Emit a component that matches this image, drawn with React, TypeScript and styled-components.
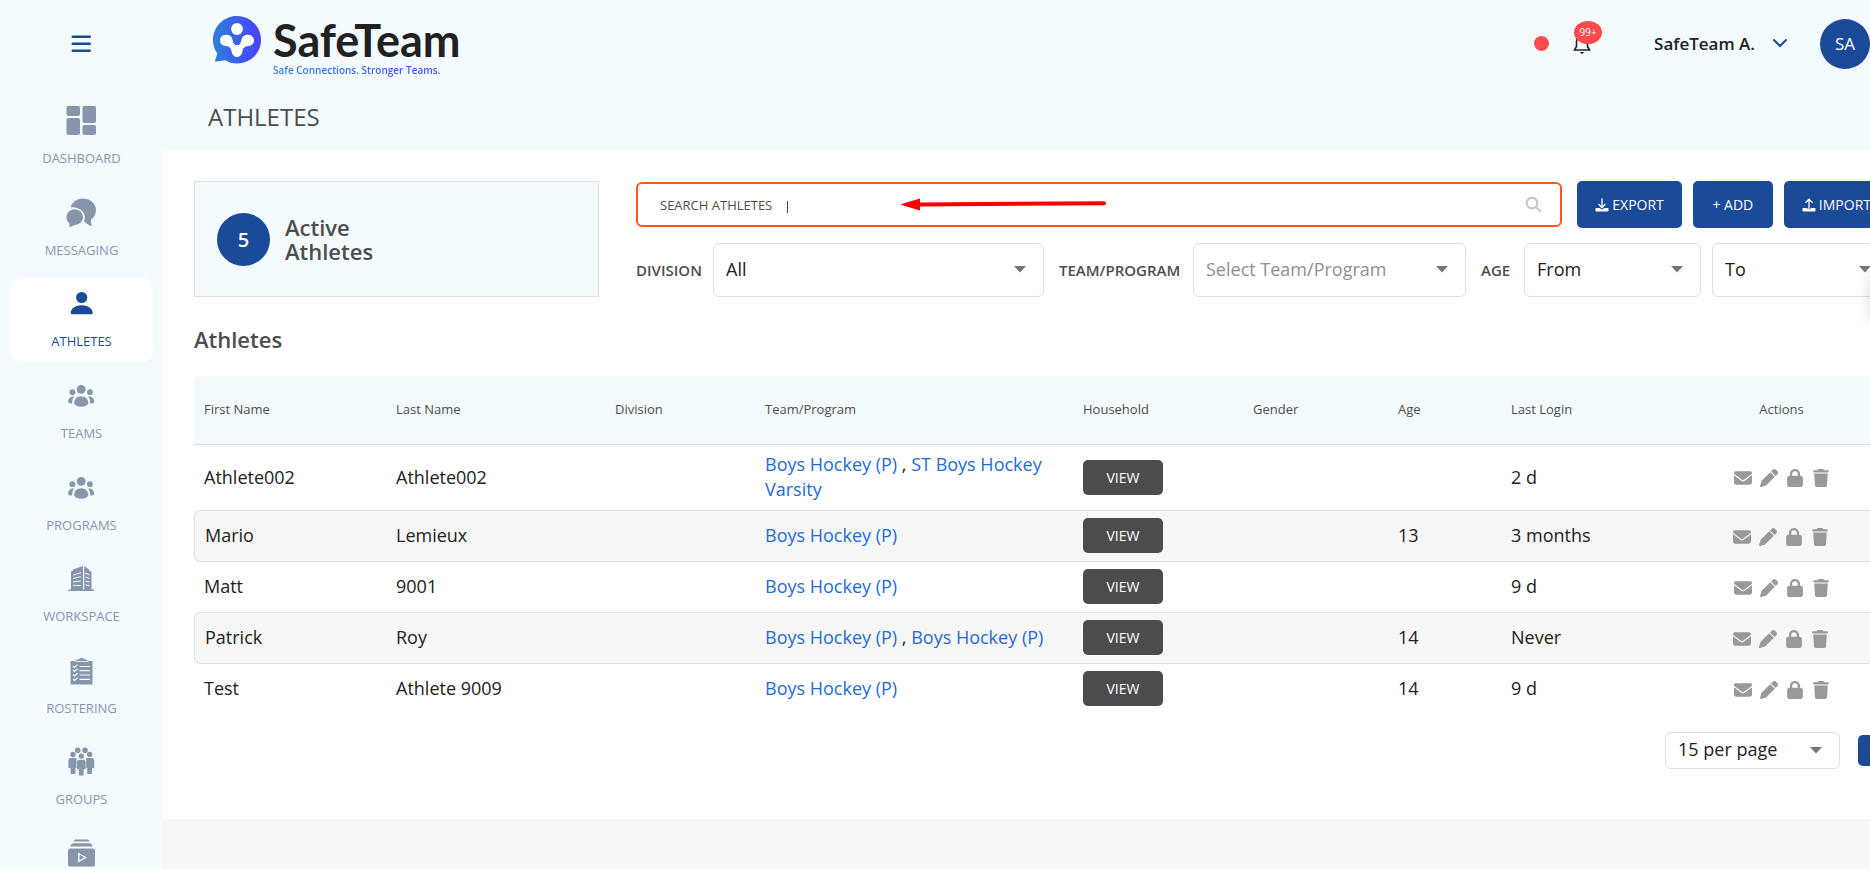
import React from "react";
import styled, { createGlobalStyle } from "styled-components";
import { FaEnvelope, FaLock, FaPen, FaTrash } from "react-icons/fa6";

const color = {
  brand: "#1b4a99",
  tint: "#f3fbff",
  muted: "#8896ab",
  heading: "#4d4d4d",
  text: "#212121",
  line: "#dddfe1",
  stripe: "#f7f7f7",
  alert: "#ff4b4b",
  accent: "#ff5722",
  link: "#1f6bd8",
};

const GlobalStyle = createGlobalStyle`
  *, *::before, *::after { box-sizing: border-box; }
  body {
    margin: 0;
    overflow: hidden;
    background: ${color.stripe};
    color: ${color.text};
    font-family: "Open Sans", sans-serif;
    font-size: 18px;
  }
  button, input, select { font-family: inherit; }
  h1, h2, p { margin: 0; }
`;

const Viewport = styled.div`
  height: 100vh;
  overflow: hidden;
`;

const Shell = styled.div`
  display: flex;
  width: calc(100% + 50px);
  height: 100%;
`;

const Sidebar = styled.nav`
  flex: 0 0 163px;
  overflow: hidden;
  padding: 0 10px;
  background: ${color.tint};
`;

const MenuButton = styled.button`
  display: flex;
  align-items: center;
  justify-content: center;
  width: 100%;
  height: 87px;
  padding: 0;
  border: 0;
  background: none;
  color: ${color.brand};
`;

const NavList = styled.ul`
  display: flex;
  flex-direction: column;
  justify-content: space-between;
  min-height: 818px;
  margin: 7px 0 0;
  padding: 0;
  list-style: none;
`;

const NavLink = styled.a<{ $active?: boolean }>`
  display: flex;
  flex-direction: column;
  align-items: center;
  gap: 13px;
  height: 85px;
  padding-top: 11px;
  border-radius: 12px;
  background: ${(p) => (p.$active ? "#fff" : "transparent")};
  color: ${(p) => (p.$active ? color.brand : color.muted)};
  font-size: 13px;
  line-height: 16px;
  text-decoration: none;
`;

const Column = styled.div`
  display: flex;
  flex: 1;
  flex-direction: column;
  min-width: 0;
`;

const Header = styled.header`
  display: flex;
  align-items: center;
  height: 87px;
  padding: 0 50px;
  background: ${color.tint};
`;

const Brand = styled.a`
  display: flex;
  align-items: flex-start;
  gap: 12px;
  padding-top: 5px;
  text-decoration: none;
`;

const BrandText = styled.span`
  display: flex;
  flex-direction: column;
`;

const BrandName = styled.span`
  color: #212121;
  font-family: Lato, sans-serif;
  font-size: 45px;
  font-weight: 700;
  line-height: 48px;
`;

const Tagline = styled.span`
  align-self: flex-start;
  background: linear-gradient(90deg, #2f80d8, #4a48ff);
  background-clip: text;
  -webkit-background-clip: text;
  color: transparent;
  font-size: 10px;
  font-weight: 600;
  line-height: 13px;
`;

const Account = styled.div`
  display: flex;
  align-items: center;
  margin-left: auto;
`;

const StatusDot = styled.span`
  width: 15px;
  height: 15px;
  border-radius: 50%;
  background: ${color.alert};
`;

const BellButton = styled.button`
  position: relative;
  display: flex;
  margin-left: 23px;
  padding: 0;
  border: 0;
  background: none;
  color: ${color.text};
`;

const Badge = styled.span`
  position: absolute;
  top: -13px;
  left: 2px;
  width: 28px;
  height: 23px;
  border-radius: 50%;
  background: ${color.alert};
  color: #fff;
  font-size: 10px;
  line-height: 23px;
  text-align: center;
`;

const AccountButton = styled.button`
  display: flex;
  align-items: center;
  gap: 18px;
  margin-left: 62px;
  padding: 0;
  border: 0;
  background: none;
  color: ${color.text};
  font-size: 17px;
  font-weight: 600;
  line-height: 24px;
  svg { color: ${color.brand}; }
`;

const Avatar = styled.span`
  display: grid;
  place-items: center;
  width: 50px;
  height: 50px;
  margin-left: 33px;
  border-radius: 50%;
  background: ${color.brand};
  color: #fff;
  font-size: 17px;
  font-weight: 500;
`;

const TitleBar = styled.div`
  height: 63px;
  padding: 16px 45px 0;
  background: ${color.tint};
`;

const PageTitle = styled.h1`
  color: ${color.heading};
  font-size: 24px;
  font-weight: 400;
  line-height: 28px;
`;

const Main = styled.main`
  padding: 31px 31px 50px;
  background: #fff;
`;

const Toolbar = styled.section`
  display: grid;
  grid-template-columns: 405fr 1253fr;
  gap: 37px;
`;

const CountCard = styled.div`
  display: flex;
  align-items: center;
  gap: 15px;
  padding: 0 22px;
  border: 1px solid ${color.line};
  background: ${color.tint};
`;

const Count = styled.span`
  display: grid;
  place-items: center;
  width: 53px;
  height: 53px;
  border-radius: 50%;
  background: ${color.brand};
  color: #fff;
  font-size: 20px;
  font-weight: 600;
`;

const CountLabel = styled.span`
  width: 100px;
  color: ${color.heading};
  font-size: 22px;
  font-weight: 600;
  line-height: 24px;
`;

const Controls = styled.div`
  display: flex;
  flex-direction: column;
  gap: 15px;
`;

const SearchRow = styled.div`
  display: flex;
  align-items: center;
  gap: 11px;
`;

const SearchBox = styled.div`
  position: relative;
  display: flex;
  flex: 1;
  align-items: center;
  height: 45px;
  margin-right: 4px;
  padding: 0 18px 0 22px;
  border: 2px solid ${color.accent};
  border-radius: 6px;
  color: ${color.heading};
`;

const SearchInput = styled.input`
  flex: 1;
  min-width: 0;
  padding: 0;
  border: 0;
  outline: 0;
  background: none;
  color: inherit;
  font-size: 13px;
  &::placeholder { color: inherit; opacity: 1; }
`;

const Caret = styled.span`
  position: absolute;
  top: 17px;
  left: 149px;
  width: 1px;
  height: 12px;
  background: ${color.heading};
`;

const Pointer = styled.svg`
  position: absolute;
  top: 13px;
  left: 262px;
`;

const PrimaryButton = styled.button`
  display: flex;
  align-items: center;
  justify-content: center;
  gap: 3px;
  min-width: 80px;
  height: 47px;
  padding: 0 18px;
  border: 0;
  border-radius: 5px;
  background: ${color.brand};
  color: #fff;
  font-size: 14px;
  font-weight: 500;
  line-height: 20px;
  white-space: nowrap;
`;

const Filters = styled.div`
  display: grid;
  grid-template-columns: 77px 331fr 149px 273fr 58px 365fr;
  align-items: center;
`;

const FilterLabel = styled.label<{ $inset?: boolean }>`
  padding-left: ${(p) => (p.$inset ? 15 : 0)}px;
  color: ${color.heading};
  font-size: 15px;
  font-weight: 600;
`;

const AgeRange = styled.div`
  display: flex;
  gap: 11px;
`;

const SelectWrap = styled.div<{ $compact?: boolean }>`
  position: relative;
  flex: ${(p) => (p.$compact ? "0 0 175px" : 1)};
  height: ${(p) => (p.$compact ? 37 : 54)}px;
  svg {
    position: absolute;
    top: calc(50% - 4px);
    right: 18px;
    pointer-events: none;
  }
`;

const Select = styled.select<{ $placeholder?: boolean }>`
  width: 100%;
  height: 100%;
  padding: 0 36px 3px 12px;
  border: 1px solid ${color.line};
  border-radius: 6px;
  appearance: none;
  background: #fff;
  color: ${(p) => (p.$placeholder ? "#8f8f8f" : color.text)};
  font-size: 18px;
`;

const SectionTitle = styled.h2`
  padding: 29px 0 24px;
  color: ${color.heading};
  font-size: 22px;
  font-weight: 600;
  line-height: 26px;
`;

const Table = styled.table`
  width: 100%;
  border-spacing: 0;
  table-layout: fixed;
  th {
    height: 69px;
    padding: 0 10px 2px;
    border-bottom: 1px solid #d3dce1;
    background: ${color.tint};
    color: ${color.heading};
    font-size: 13px;
    font-weight: 500;
    text-align: left;
  }
  th:first-child { border-top-left-radius: 5px; }
  th:last-child { border-top-right-radius: 5px; text-align: center; }
`;

const Row = styled.tr`
  td {
    padding: 7px 10px 8px;
    line-height: 25px;
  }
  &:nth-child(even) td {
    border: solid ${color.line};
    border-width: 1px 0;
    background: ${color.stripe};
  }
  &:nth-child(even) td:first-child {
    border-left-width: 1px;
    border-radius: 6px 0 0 6px;
  }
  &:nth-child(even) td:last-child {
    border-right-width: 1px;
    border-radius: 0 6px 6px 0;
  }
`;

const TeamLink = styled.a`
  color: ${color.link};
  text-decoration: none;
`;

const ViewButton = styled.button`
  display: block;
  width: 80px;
  height: 35px;
  padding: 0;
  border: 0;
  border-radius: 5px;
  background: #4c4c4c;
  color: #fff;
  font-size: 14px;
  font-weight: 500;
`;

const Actions = styled.div`
  display: flex;
  justify-content: center;
  padding-top: 2px;
`;

const IconButton = styled.button`
  display: grid;
  place-items: center;
  width: 26px;
  height: 26px;
  padding: 0;
  border: 0;
  background: none;
  color: #999;
  font-size: 18px;
`;

const Pagination = styled.div`
  display: flex;
  align-items: center;
  justify-content: flex-end;
  gap: 18px;
  padding-top: 18px;
`;

const PageButton = styled.button`
  width: 31px;
  height: 31px;
  padding: 0;
  border: 0;
  border-radius: 5px;
  background: ${color.brand};
  color: #fff;
  font-size: 18px;
`;

const SideTab = styled.div`
  position: fixed;
  top: 272px;
  left: 100%;
  width: 40px;
  height: 48px;
  box-shadow: 0 0 14px rgba(0, 0, 0, 0.14);
`;

const NavIcon = ({ children }: { children: React.ReactNode }) => (
  <svg width="32" height="32" viewBox="0 0 32 32" fill="currentColor" aria-hidden="true">
    {children}
  </svg>
);

const DashboardIcon = () => (
  <NavIcon>
    <rect x="0.500" y="1" width="13.500" height="10" rx="2" />
    <rect x="0.500" y="13" width="13.500" height="17" rx="2" />
    <rect x="16.500" y="1" width="13.500" height="17" rx="2" />
    <rect x="16.500" y="20" width="13.500" height="10" rx="2" />
  </NavIcon>
);

const MessagingIcon = () => (
  <NavIcon>
    <path d="M4.700 10.200C6.100 5 10.800 1.500 16.800 1.500C24.600 1.500 30 6.700 30 13.200C30 17 28 20.500 25 22.600C24.900 24.500 25.100 26.500 25.600 28.400C25.800 29 25.300 29.200 24.800 28.900C22.800 27.900 20.600 26.600 18.600 25C17.900 24.600 17.800 24.300 18.100 23.700C19.200 21.500 19.100 18.700 17.800 16.300C15.700 12.300 10.800 9.700 4.700 10.200Z" />
    <path d="M8.700 12.200C4.100 12.200 0.500 15.800 0.500 20.200C0.500 22.600 1.700 24.900 3.500 26.400C3.600 27.500 3.500 28.700 3.200 29.500C3.100 30 3.400 30.200 3.900 30L8.800 28C13.400 27.800 17 24.400 17 20.200C17 15.800 13.300 12.200 8.700 12.200Z" />
  </NavIcon>
);

const PersonIcon = () => (
  <NavIcon>
    <circle cx="15.700" cy="9.500" r="5.600" />
    <path d="M4.700 25C4.700 20.500 9.700 17.200 15.700 17.200S26.700 20.500 26.700 25C26.700 26 26.200 26.200 25.200 26.200H6.200C5.200 26.200 4.700 26 4.700 25Z" />
  </NavIcon>
);

const TeamIcon = () => (
  <NavIcon>
    <circle cx="15.200" cy="9.300" r="4.400" />
    <circle cx="6.400" cy="12.200" r="2.900" />
    <circle cx="23.900" cy="12.200" r="2.900" />
    <path d="M8.100 23.500C8.100 19 11 16.200 15.200 16.200S22.300 19 22.300 23.500C20.900 25.600 18.400 26.700 15.200 26.700S9.500 25.600 8.100 23.500Z" />
    <path d="M2.200 22.500C2 18.600 4 16.300 8.300 16.600C6.700 18.300 6.100 20.500 6.200 23.400C4.600 23.700 3.100 23.500 2.200 22.500ZM28.200 22.500C28.400 18.600 26.400 16.300 22.100 16.600C23.700 18.300 24.300 20.500 24.200 23.400C25.800 23.700 27.300 23.500 28.200 22.500Z" />
  </NavIcon>
);

const BuildingIcon = () => (
  <NavIcon>
    <path d="M5 8.500L7 7.500V6.500L17 3V27H5ZM18.200 3L23 6.500V7.500L25.500 9V27H18.200Z" />
    <path d="M2.500 26.500H28V28H2.500Z" />
    <path d="M7 12L15 9.800M7 15.500L15 13.800M7 19L15 18M7 22.500H15M19.500 10L23.500 12M19.500 14L23.500 15.500M19.500 18L23.500 19M19.500 22L23.500 22.500" stroke={color.tint} strokeWidth="1.100" />
  </NavIcon>
);

const RosterIcon = () => (
  <NavIcon>
    <path d="M4.500 6H26.500V29.500H4.500Z" />
    <path d="M9.500 6.500C9.500 4.500 10.500 4 13 4C13.500 2 18 2 18.500 4C21 4 22 4.500 22 6.500Z" stroke={color.tint} strokeWidth="0.800" />
    <path d="M7 11L8.500 12.500L11.500 9.800M7 15L8.500 16.500L11.500 13.800M7 19.500L8.500 21L11.500 18.200M7 24L8.500 25.500L11.500 22.600M13.500 11.500H24M13.500 15.700H24M13.500 20H24M13.500 24.300H24" fill="none" stroke={color.tint} strokeWidth="1.200" />
  </NavIcon>
);

const GroupIcon = () => (
  <NavIcon>
    <circle cx="11.700" cy="4.300" r="2.800" />
    <circle cx="19" cy="4.300" r="2.800" />
    <circle cx="7" cy="8.500" r="2.700" />
    <circle cx="23.600" cy="8.500" r="2.700" />
    <circle cx="15.300" cy="10.100" r="2.700" />
    <path d="M4.900 12.100H9.400C10.400 12.100 10.900 13 10.400 14V22H9.400V28H4.600V22H2.400V14.500C2.400 13 3.400 12.100 4.900 12.100ZM25.700 12.100H21.200C20.200 12.100 19.700 13 20.200 14V22H21.200V28H26V22H28.200V14.500C28.200 13 27.200 12.100 25.700 12.100Z" />
    <path d="M13.400 13.800H17.200C18.700 13.800 19.700 14.700 19.700 16.200V23.200H17.700V29.500H12.900V23.200H10.900V16.200C10.900 14.700 11.900 13.800 13.400 13.800Z" />
  </NavIcon>
);

const MediaIcon = () => (
  <NavIcon>
    <path d="M7.500 3.500C7.800 2 9 1.500 10.500 1.500H20.500C22 1.500 23.200 2 23.500 3.500ZM4.500 8.500C4.800 6.500 6 5.300 8 5.300H23C25 5.300 26.200 6.500 26.500 8.500Z" />
    <path fillRule="evenodd" d="M4 10.500H27Q29 10.500 29 12.500V26.500Q29 28.500 27 28.500H4Q2 28.500 2 26.500V12.500Q2 10.500 4 10.500ZM12 14.500V24.500L21 19.500ZM13.500 16.800L18.300 19.500L13.500 22.200Z" />
  </NavIcon>
);

const ChevronIcon = () => (
  <svg width="14" height="9" viewBox="0 0 14 9" fill="none" stroke="currentColor" strokeWidth="2" aria-hidden="true">
    <path d="M1 1L7 7L13 1" strokeLinecap="round" />
  </svg>
);

const Triangle = () => (
  <svg width="12" height="7" viewBox="0 0 12 7" aria-hidden="true">
    <path d="M0 0H12L6 6.500Z" fill="#757575" />
  </svg>
);

const TransferIcon = ({ up }: { up?: boolean }) => (
  <svg width="14" height="14" viewBox="0 0 14 14" fill="none" stroke="#fff" strokeWidth="1.300" aria-hidden="true">
    <path d={up ? "M7 11V1.500M3.500 4.800L7 1.200L10.500 4.800" : "M7 0.500V9M3.500 6L7 9.500L10.500 6"} />
    <path d="M1 10H4.500L7 11.500L9.500 10H13Q13.500 10 13.500 10.500V12.500Q13.500 13.500 12.500 13.500H1.500Q0.500 13.500 0.500 12.500V10.500Q0.500 10 1 10Z" fill="#fff" stroke="none" />
  </svg>
);

const LogoMark = () => (
  <svg width="48" height="48" viewBox="0 0 48 48" aria-hidden="true">
    <defs>
      <linearGradient id="mark" x1="0" y1="0" x2="1" y2="0">
        <stop offset="0" stopColor="#2f80d8" />
        <stop offset="1" stopColor="#4a40ff" />
      </linearGradient>
    </defs>
    <path fill="url(#mark)" d="M24 0C37.300 0 48 10.700 48 24S37.300 47.500 24 47.500C19.500 47.500 16 46.500 12.500 44.300L3 45.600C2 45.700 1.800 45 2.200 44.300L4.300 37.500C1.500 33.500 0 29 0 24C0 10.700 10.700 0 24 0Z" />
    <circle cx="24" cy="13" r="5.900" fill="#fff" />
    <path fill="#fff" d="M13 18.700C17 18.700 18.600 20.500 19.300 23C20 27 21.500 29.300 24 29.300C26.500 29.300 28 27 28.700 23C29.400 20.500 31 18.700 35 18.700C38.800 18.700 41 21.500 41 24.300C41 27.500 38.800 29.700 35.500 30C31.500 30.500 30 32 29.500 35C29 38.500 27 41 24 41C21 41 19 38.500 18.500 35C18 32 16.500 30.500 12.500 30C9.200 29.700 7 27.500 7 24.300C7 21.500 9.200 18.700 13 18.700Z" />
  </svg>
);

const navItems = [
  { name: "Dashboard", label: "DASHBOARD", Icon: DashboardIcon },
  { name: "Messaging", label: "MESSAGING", Icon: MessagingIcon },
  { name: "Athletes", label: "ATHLETES", Icon: PersonIcon, active: true },
  { name: "Teams", label: "TEAMS", Icon: TeamIcon },
  { name: "Programs", label: "PROGRAMS", Icon: TeamIcon },
  { name: "Workspace", label: "WORKSPACE", Icon: BuildingIcon },
  { name: "Rostering", label: "ROSTERING", Icon: RosterIcon },
  { name: "Groups", label: "GROUPS", Icon: GroupIcon },
  { name: "Media", Icon: MediaIcon },
];

const columns = [
  { title: "First Name", width: 192 },
  { title: "Last Name", width: 219 },
  { title: "Division", width: 150 },
  { title: "Team/Program", width: 318 },
  { title: "Household", width: 170 },
  { title: "Gender", width: 145 },
  { title: "Age", width: 113 },
  { title: "Last Login", width: 173 },
  { title: "Actions", width: 215 },
];

const athletes = [
  { first: "Athlete002", last: "Athlete002", teams: ["Boys Hockey (P)", "ST Boys Hockey Varsity"], age: "", login: "2 d" },
  { first: "Mario", last: "Lemieux", teams: ["Boys Hockey (P)"], age: "13", login: "3 months" },
  { first: "Matt", last: "9001", teams: ["Boys Hockey (P)"], age: "", login: "9 d" },
  { first: "Patrick", last: "Roy", teams: ["Boys Hockey (P)", "Boys Hockey (P)"], age: "14", login: "Never" },
  { first: "Test", last: "Athlete 9009", teams: ["Boys Hockey (P)"], age: "14", login: "9 d" },
];

const actions = [
  { name: "Email", Icon: FaEnvelope },
  { name: "Edit", Icon: FaPen },
  { name: "Lock", Icon: FaLock },
  { name: "Delete", Icon: FaTrash },
];

type DropdownProps = { option: string; id?: string; label?: string; placeholder?: boolean; compact?: boolean };

const Dropdown = ({ option, id, label, placeholder, compact }: DropdownProps) => (
  <SelectWrap $compact={compact}>
    <Select id={id} aria-label={label} $placeholder={placeholder}>
      <option>{option}</option>
    </Select>
    <Triangle />
  </SelectWrap>
);

export default function App() {
  return (
    <Viewport>
      <GlobalStyle />
      <Shell>
        <Sidebar>
          <MenuButton aria-label="Toggle menu">
            <svg width="22" height="18" viewBox="0 0 22 18" stroke="currentColor" strokeWidth="2.600" strokeLinecap="round">
              <path d="M1.800 1.800H18.700M1.800 8.800H18.700M1.800 15.800H18.700" />
            </svg>
          </MenuButton>
          <NavList>
            {navItems.map(({ name, label, Icon, active }) => (
              <li key={name}>
                <NavLink href="#" aria-label={name} $active={active}>
                  <Icon />
                  {label}
                </NavLink>
              </li>
            ))}
          </NavList>
        </Sidebar>

        <Column>
          <Header>
            <Brand href="#">
              <LogoMark />
              <BrandText>
                <BrandName>SafeTeam</BrandName>
                <Tagline>Safe Connections. Stronger Teams.</Tagline>
              </BrandText>
            </Brand>
            <Account>
              <StatusDot />
              <BellButton aria-label="Notifications">
                <svg width="20" height="20" viewBox="0 0 20 20" fill="none" stroke="currentColor" strokeWidth="1.600">
                  <path d="M2.500 16H17.500L15.500 12.500V7.500C15.500 4.500 13 2 10 2S4.500 4.500 4.500 7.500V12.500Z" />
                  <path d="M7.500 18H12.500L10 20Z" fill="currentColor" stroke="none" />
                </svg>
                <Badge>99+</Badge>
              </BellButton>
              <AccountButton>
                SafeTeam A.
                <ChevronIcon />
              </AccountButton>
              <Avatar>SA</Avatar>
            </Account>
          </Header>
          <TitleBar>
            <PageTitle>ATHLETES</PageTitle>
          </TitleBar>

          <Main>
            <Toolbar>
              <CountCard>
                <Count>5</Count>
                <CountLabel>Active Athletes</CountLabel>
              </CountCard>
              <Controls>
                <SearchRow>
                  <SearchBox>
                    <SearchInput type="text" aria-label="Search athletes" placeholder="SEARCH ATHLETES" />
                    <svg width="17" height="17" viewBox="0 0 17 17" fill="none" stroke="#c4c4c4" strokeWidth="2" aria-hidden="true">
                      <circle cx="7" cy="7" r="5.300" />
                      <path d="M11 11L16 16" />
                    </svg>
                    <Caret />
                    <Pointer width="210" height="16" viewBox="0 0 210 16" aria-hidden="true">
                      <path d="M20 7.500L204 6.200" stroke="#f00" strokeWidth="4" strokeLinecap="round" />
                      <path d="M0 7.500L20 1.500V13.500Z" fill="#f00" />
                    </Pointer>
                  </SearchBox>
                  <PrimaryButton>
                    <TransferIcon />
                    EXPORT
                  </PrimaryButton>
                  <PrimaryButton>+ ADD</PrimaryButton>
                  <PrimaryButton>
                    <TransferIcon up />
                    IMPORT
                  </PrimaryButton>
                </SearchRow>
                <Filters>
                  <FilterLabel htmlFor="division">DIVISION</FilterLabel>
                  <Dropdown id="division" option="All" />
                  <FilterLabel htmlFor="team" $inset>TEAM/PROGRAM</FilterLabel>
                  <Dropdown id="team" option="Select Team/Program" placeholder />
                  <FilterLabel htmlFor="age-from" $inset>AGE</FilterLabel>
                  <AgeRange>
                    <Dropdown id="age-from" option="From" />
                    <Dropdown label="Age to" option="To" />
                  </AgeRange>
                </Filters>
              </Controls>
            </Toolbar>

            <SectionTitle>Athletes</SectionTitle>
            <Table>
              <colgroup>
                {columns.map((c) => (
                  <col key={c.title} width={c.width} />
                ))}
              </colgroup>
              <thead>
                <tr>
                  {columns.map((c) => (
                    <th key={c.title} scope="col">{c.title}</th>
                  ))}
                </tr>
              </thead>
              <tbody>
                {athletes.map((a) => (
                  <Row key={a.first}>
                    <td>{a.first}</td>
                    <td>{a.last}</td>
                    <td />
                    <td>
                      {a.teams.map((team, i) => (
                        <React.Fragment key={i}>
                          {i > 0 && " , "}
                          <TeamLink href="#">{team}</TeamLink>
                        </React.Fragment>
                      ))}
                    </td>
                    <td><ViewButton>VIEW</ViewButton></td>
                    <td />
                    <td>{a.age}</td>
                    <td>{a.login}</td>
                    <td>
                      <Actions>
                        {actions.map(({ name, Icon }) => (
                          <IconButton key={name} aria-label={name}><Icon /></IconButton>
                        ))}
                      </Actions>
                    </td>
                  </Row>
                ))}
              </tbody>
            </Table>
            <Pagination>
              <Dropdown label="Rows per page" option="15 per page" compact />
              <PageButton>1</PageButton>
            </Pagination>
          </Main>
        </Column>
      </Shell>
      <SideTab />
    </Viewport>
  );
}
